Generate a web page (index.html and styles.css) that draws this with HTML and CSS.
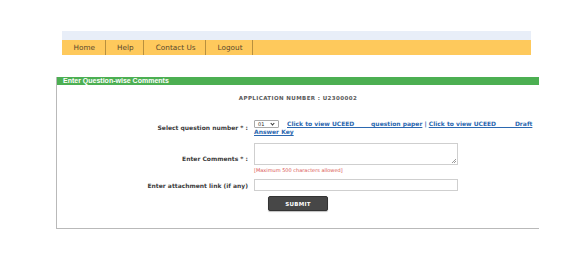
FILE: index.html
```html
<!DOCTYPE html>
<html>
<head>
<meta charset="utf-8">
<link rel="stylesheet" href="styles.css">
</head>
<body>
<div class="page">
  <div class="topnav">
    <div class="topnav-strip"></div>
    <div class="menu">
      <a class="menu-item" href="#">Home</a>
      <a class="menu-item" href="#">Help</a>
      <a class="menu-item" href="#">Contact Us</a>
      <a class="menu-item" href="#">Logout</a>
    </div>
  </div>

  <div class="panel">
    <div class="panel-head">Enter Question-wise Comments</div>
    <div class="appno">APPLICATION NUMBER : U2300002</div>

    <div class="form">
      <div class="row row-question">
        <div class="label">Select question number * :</div>
        <div class="field">
          <span class="select"><span class="select-value">01</span><span class="chev"></span></span><span class="links"><a href="#">Click to view UCEED&nbsp;&nbsp;&nbsp;&nbsp;&nbsp;&nbsp;&nbsp;&nbsp;question paper</a> | <a href="#">Click to view UCEED&nbsp;&nbsp;&nbsp;&nbsp;&nbsp;&nbsp;&nbsp;&nbsp;&nbsp;Draft Answer Key</a></span>
        </div>
      </div>

      <div class="row row-comments">
        <div class="label">Enter Comments * :</div>
        <div class="field">
          <div class="textarea"><span class="grip"></span></div>
          <div class="note">[Maximum 500 characters allowed]</div>
        </div>
      </div>

      <div class="row row-link">
        <div class="label">Enter attachment link (if any)</div>
        <div class="field">
          <div class="input"></div>
        </div>
      </div>

      <div class="actions">
        <button class="submit" type="button">SUBMIT</button>
      </div>
    </div>
  </div>
</div>
</body>
</html>
```

FILE: styles.css
```css
html, body {
  margin: 0;
  padding: 0;
  background: #ffffff;
}
body {
  font-family: "DejaVu Sans", Verdana, sans-serif;
  color: #333333;
}
.page {
  padding-top: 31px;
}
.topnav {
  margin-left: 62px;
  width: 469px;
}
.topnav-strip {
  height: 9px;
  background: #e8eef8;
}
.menu {
  display: flex;
  height: 15px;
  background: #fec95c;
}
.menu-item {
  display: block;
  line-height: 15px;
  font-size: 7.3px;
  color: #5b4a2c;
  text-decoration: none;
  padding: 0 9.5px 0 11.5px;
  border-right: 1px solid #b8903e;
}
.panel {
  margin-top: 22px;
  margin-left: 56px;
  width: 482px;
  border-left: 1px solid #b9b9b9;
  border-bottom: 1px solid #b9b9b9;
  padding-bottom: 17px;
}
.panel-head {
  height: 8px;
  line-height: 8px;
  background: #4caf52;
  color: #ffffff;
  font-family: "Liberation Sans", Arial, sans-serif;
  font-weight: bold;
  font-size: 7px;
  padding-left: 6px;
}
.appno {
  margin-top: 10px;
  text-align: center;
  font-size: 5.5px;
  line-height: 6px;
  font-weight: bold;
  color: #5a5a5a;
  letter-spacing: 0.4px;
}
.form {
  margin-top: 19px;
}
.row {
  display: grid;
  grid-template-columns: 194px 1fr;
  column-gap: 3px;
  align-items: center;
}
.label {
  text-align: right;
  padding-right: 3px;
  font-size: 6px;
  font-weight: bold;
  color: #3c3c3c;
}
.field {
  padding-right: 4px;
}
.row-question .field {
  font-size: 6px;
  line-height: 7px;
}
.select {
  display: inline-flex;
  align-items: center;
  justify-content: space-between;
  vertical-align: top;
  box-sizing: border-box;
  width: 25px;
  height: 8px;
  border: 1px solid #a9a9a9;
  border-radius: 1px;
  padding: 0 4px 0 3px;
  margin-right: 8px;
}
.select-value {
  font-size: 5px;
  line-height: 6px;
  font-weight: normal;
  color: #222;
}
.chev {
  width: 2px;
  height: 2px;
  margin-top: -2px;
  border-right: 1px solid #333;
  border-bottom: 1px solid #333;
  transform: rotate(45deg);
}
.links {
  color: #2b68b0;
  font-weight: bold;
}
.links a {
  color: #2b68b0;
  text-decoration: underline;
}
.row-comments {
  margin-top: 8px;
}
.textarea {
  box-sizing: border-box;
  width: 204px;
  height: 22px;
  border: 1px solid #cfcfcf;
  position: relative;
}
.grip {
  position: absolute;
  right: 1px;
  bottom: 1px;
  width: 4px;
  height: 4px;
  background: linear-gradient(135deg, transparent 45%, #9a9a9a 45%, #9a9a9a 55%, transparent 55%, transparent 75%, #9a9a9a 75%, #9a9a9a 85%, transparent 85%);
}
.note {
  margin-top: 2px;
  font-size: 5px;
  line-height: 6px;
  color: #d9534f;
}
.row-link {
  margin-top: 6px;
}
.input {
  box-sizing: border-box;
  width: 204px;
  height: 12px;
  border: 1px solid #cfcfcf;
}
.actions {
  margin-top: 5px;
  display: flex;
  justify-content: center;
}
.submit {
  box-sizing: border-box;
  width: 60px;
  height: 15px;
  padding: 0;
  background: #474747;
  border: 1px solid #333333;
  border-radius: 2px;
  color: #ffffff;
  font-family: "DejaVu Sans", Verdana, sans-serif;
  font-weight: bold;
  font-size: 5.5px;
  letter-spacing: 0.3px;
  box-shadow: 0 1px 1px rgba(0,0,0,0.25);
}
```
